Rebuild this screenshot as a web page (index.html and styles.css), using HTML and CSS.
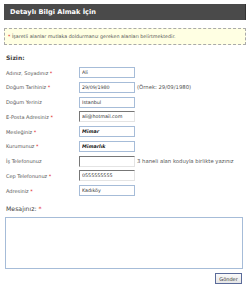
FILE: index.html
```html
<!DOCTYPE html>
<html lang="tr">
<head>
  <meta charset="UTF-8">
  <meta name="viewport" content="width=device-width, initial-scale=1.0">
  <title>Detaylı Bilgi Almak İçin</title>
  <link rel="stylesheet" href="styles.css">
</head>
<body>
  <div class="page">
    <div class="title">Detaylı Bilgi Almak İçin</div>

    <div class="note"><span class="req">*</span> İşaretli alanlar mutlaka doldurmanız gereken alanları belirtmektedir.</div>

    <form class="info-form" action="#" method="post">
      <div class="section">Sizin:</div>

      <div class="row">
        <label for="name">Adınız, Soyadınız <span class="req">*</span></label>
        <input type="text" id="name" value="Ali">
      </div>
      <div class="row">
        <label for="birth">Doğum Tarihiniz <span class="req">*</span></label>
        <input type="text" id="birth" value="29/09/1980">
        <span class="hint">(Örnek: 29/09/1980)</span>
      </div>
      <div class="row">
        <label for="place">Doğum Yeriniz</label>
        <input type="text" id="place" value="İstanbul">
      </div>
      <div class="row">
        <label for="email">E-Posta Adresiniz <span class="req">*</span></label>
        <input type="text" id="email" class="inset" value="ali@hotmail.com">
      </div>
      <div class="row">
        <label for="job">Mesleğiniz <span class="req">*</span></label>
        <input type="text" id="job" class="filled" value="Mimar">
      </div>
      <div class="row">
        <label for="company">Kurumunuz <span class="req">*</span></label>
        <input type="text" id="company" class="filled" value="Mimarlık">
      </div>
      <div class="row">
        <label for="work-phone">İş Telefonunuz</label>
        <input type="text" id="work-phone" class="inset" value="">
        <span class="hint">3 haneli alan koduyla birlikte yazınız</span>
      </div>
      <div class="row">
        <label for="mobile">Cep Telefonunuz <span class="req">*</span></label>
        <input type="text" id="mobile" class="inset" value="0555555555">
      </div>
      <div class="row">
        <label for="address">Adresiniz <span class="req">*</span></label>
        <input type="text" id="address" value="Kadıköy">
      </div>

      <div class="section message-label">Mesajınız: <span class="req">*</span></div>
      <textarea id="message"></textarea>

      <div class="actions">
        <button type="submit" class="btn">Gönder</button>
      </div>
    </form>
  </div>
</body>
</html>
```

FILE: styles.css
```css
* {
  margin: 0;
  padding: 0;
  box-sizing: border-box;
}

body {
  font-family: "DejaVu Sans", Verdana, sans-serif;
  background-color: #fff;
  color: #555;
}

.page {
  width: 250px;
  padding: 4px;
}

.title {
  height: 16px;
  line-height: 16px;
  padding-left: 6px;
  background-color: #4a4a4a;
  border-right: 1px solid #333;
  color: #fff;
  font-size: 6.6px;
  font-weight: bold;
}

.note {
  margin-top: 8px;
  height: 17px;
  line-height: 15px;
  padding-left: 3px;
  border: 1px dashed #aaa;
  background-color: #ffffe3;
  font-size: 4.8px;
  color: #555;
}

.req {
  color: #e02020;
}

.section {
  margin-top: 9px;
  padding-left: 2px;
  height: 8px;
  line-height: 8px;
  font-size: 6px;
  font-weight: bold;
  color: #444;
}

.info-form .row {
  display: flex;
  align-items: center;
  height: 11px;
  margin-top: 3.75px;
  padding-left: 2px;
}

.info-form .section + .row {
  margin-top: 5px;
}

.info-form label {
  width: 73px;
  font-size: 5px;
  color: #555;
}

.info-form input {
  width: 56px;
  height: 11px;
  padding: 0 2px;
  border: 1px solid #a6bcd8;
  font-family: "DejaVu Sans", Verdana, sans-serif;
  font-size: 4.8px;
  color: #333;
  background-color: #fff;
}

.info-form input.inset {
  border-top-color: #777;
  border-left-color: #777;
  border-right-color: #e4e4e4;
  border-bottom-color: #e4e4e4;
}

.info-form input.filled {
  font-style: italic;
  font-weight: bold;
  color: #222;
}

.hint {
  margin-left: 2px;
  font-size: 5.3px;
  color: #555;
}

.message-label {
  margin-top: 9px;
  font-weight: normal;
  font-size: 6.2px;
}

textarea {
  display: block;
  width: 238px;
  height: 52px;
  margin-top: 4px;
  margin-left: 1px;
  border: 1px solid #a6bcd8;
  resize: none;
  overflow-y: scroll;
}

textarea::-webkit-scrollbar {
  width: 8px;
}

textarea::-webkit-scrollbar-track {
  background-color: #fafafa;
  border-left: 1px solid #eee;
}

textarea::-webkit-scrollbar-button:single-button {
  display: block;
  height: 8px;
  background-color: #f0f0f0;
  border: 1px solid #e2e2e2;
}

.actions {
  display: flex;
  justify-content: flex-end;
  margin-top: 4px;
  padding-right: 4px;
}

.btn {
  width: 27px;
  height: 11px;
  border: 1px solid #5b6b9a;
  background: linear-gradient(#fafafa, #e6e6e6);
  font-family: "DejaVu Sans", Verdana, sans-serif;
  font-size: 5px;
  color: #333;
  cursor: pointer;
}
```
